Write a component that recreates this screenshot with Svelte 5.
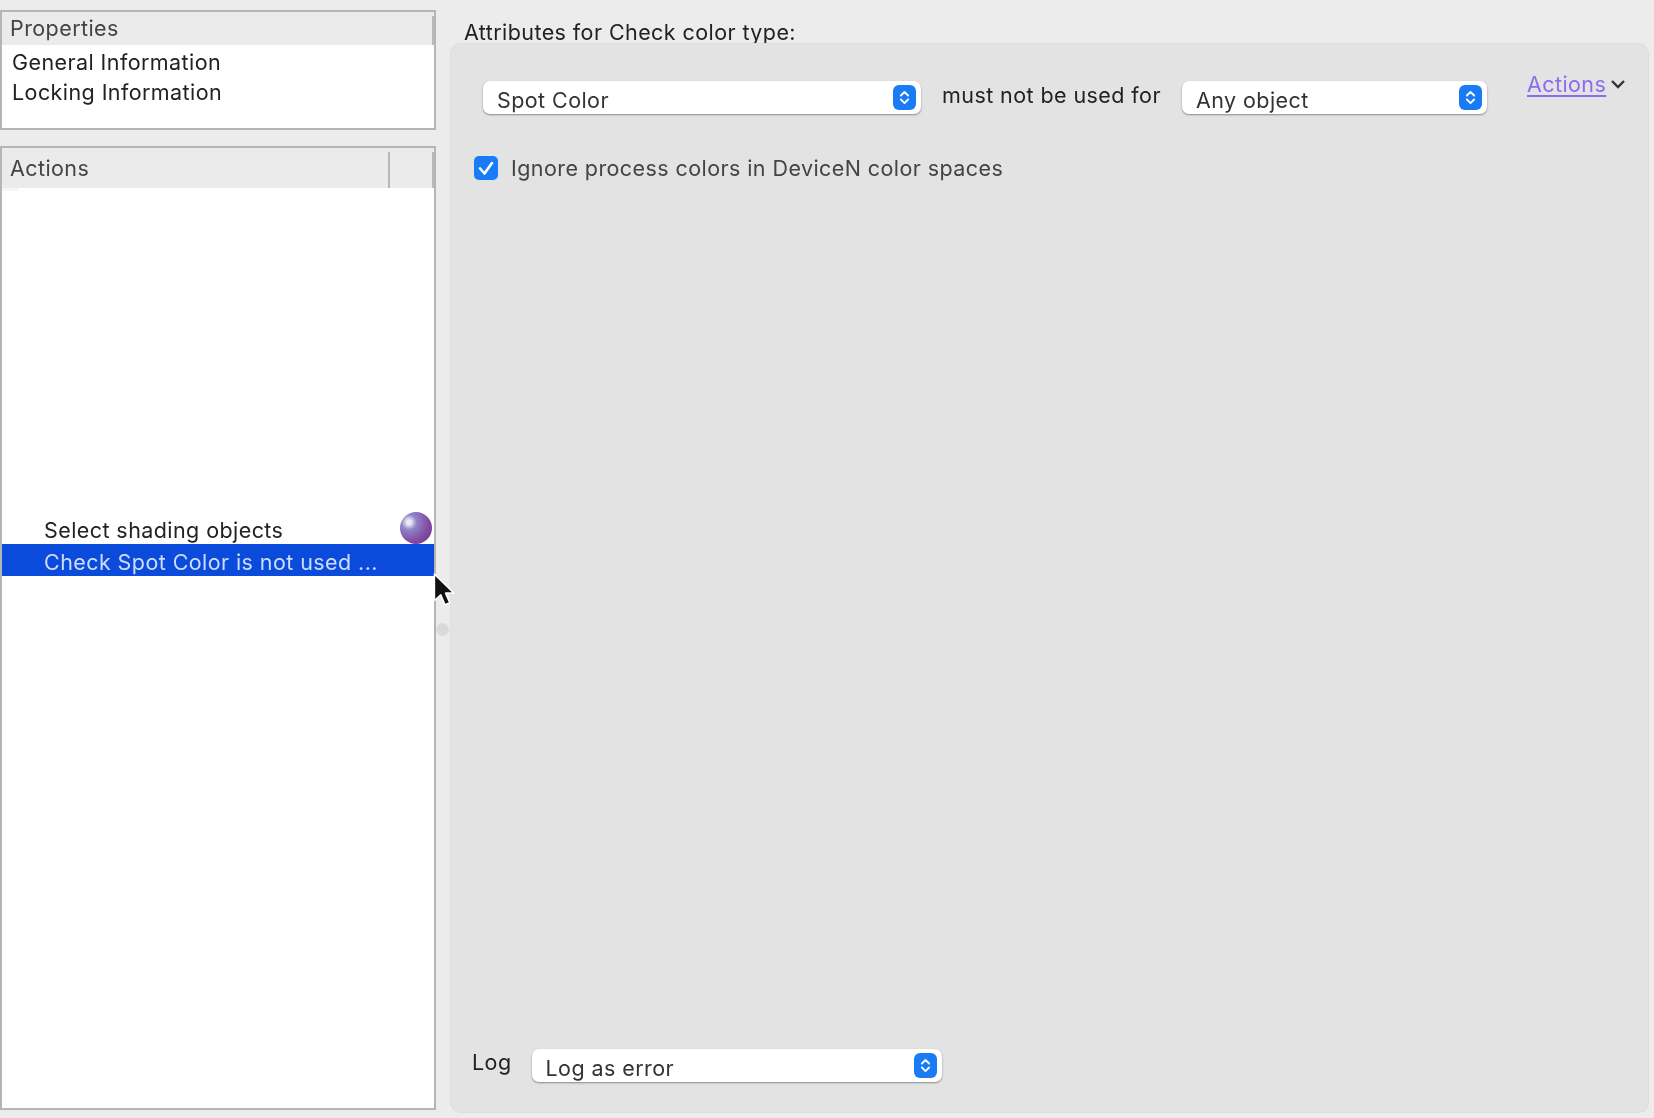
<script>
  const chevrons = "M-3.6 -2 L0 -5.6 L3.6 -2 M-3.6 2 L0 5.6 L3.6 2";
</script>

{#snippet stepper()}
  <span class="stepper">
    <svg width="23" height="25" viewBox="-11.5 -12.5 23 25"><path d={chevrons} fill="none" stroke="#fff" stroke-width="1.8" stroke-linecap="round" stroke-linejoin="round"/></svg>
  </span>
{/snippet}

<div class="page">
  <aside class="left">
    <section class="panel props">
      <header class="head"><span class="title">Properties</span><i class="sep end"></i></header>
      <ul class="plain">
        <li>General Information</li>
        <li>Locking Information</li>
      </ul>
    </section>
    <section class="panel actions">
      <header class="head"><span class="title">Actions</span><i class="sep mid"></i><i class="sep end"></i><i class="notch"></i></header>
      <div class="list">
        <div class="row normal">
          <span>Select shading objects</span>
          <span class="ball"></span>
        </div>
        <div class="row selected"><span>Check Spot Color is not used ...</span></div>
      </div>
    </section>
  </aside>

  <div class="gutter">
    <svg class="cursor" width="26" height="38" viewBox="0 0 24 36"><path d="M2 2 L2 27 L8 21.5 L12 31 L16.5 29 L12.5 20 L20.5 20 Z" fill="#111" stroke="#fff" stroke-width="1.4" stroke-linejoin="round"/></svg>
    <i class="grip"></i>
  </div>

  <main class="right">
    <h1>Attributes for Check color type:</h1>
    <div class="box">
      <div class="top">
        <div class="select s1"><span>Spot Color</span>{@render stepper()}</div>
        <span class="label must">must not be used for</span>
        <div class="select s2"><span>Any object</span>{@render stepper()}</div>
        <div class="link">
          <a href="#a">Actions</a>
          <svg width="16" height="10" viewBox="0 0 16 10"><path d="M2 2 L8 8 L14 2" fill="none" stroke="#333" stroke-width="2.4"/></svg>
        </div>
      </div>
      <label class="check">
        <span class="tick"><svg width="24" height="24" viewBox="0 0 24 24"><path d="M6 12.5 L10.5 17.5 L18 7" fill="none" stroke="#fff" stroke-width="2.6" stroke-linecap="round" stroke-linejoin="round"/></svg></span>
        <span>Ignore process colors in DeviceN color spaces</span>
      </label>
      <div class="log">
        <span class="label">Log</span>
        <div class="select s3"><span>Log as error</span>{@render stepper()}</div>
      </div>
    </div>
  </main>
</div>

<style>
  :global(body) { margin: 0; background: #ececec; }
  .page {
    width: 1654px; height: 1118px; display: flex; background: #ececec; overflow: hidden;
    font-family: Inter, "Liberation Sans", sans-serif; font-size: 21.5px; letter-spacing: 0.42px; color: #333; filter: blur(0.6px);
  }
  .left { width: 436px; flex: none; padding-top: 10px; box-sizing: border-box; display: flex; flex-direction: column; gap: 16px; }
  .panel { border: 2px solid #b5b5b5; background: #fff; box-sizing: border-box; }
  .props { height: 120px; }
  .actions { height: 964px; display: flex; flex-direction: column; }
  .head { display: flex; align-items: center; position: relative; background: #ebebeb; color: #444; padding-left: 8px; }
  .props .head { height: 33px; }
  .props .title { position: relative; top: -1px; }
  .actions .head { height: 40px; }
  .title { font-size: 21.5px; }
  .sep { position: absolute; top: 4px; bottom: 0; width: 2px; background: #b9b9b9; }
  .sep.end { right: 0; }
  .sep.mid { right: 44px; }
  .notch { position: absolute; left: 0; top: 100%; width: 17px; height: 3px; background: #f6f6f6; }
  .plain { list-style: none; margin: 0; padding: 2px 0 0 10px; color: #222; }
  .plain li { height: 30px; line-height: 30px; }
  .list { flex: 1; padding-top: 322px; }
  .row { height: 32px; display: flex; align-items: center; justify-content: space-between; padding: 0 2px 0 42px; position: relative; }
  .row.normal { color: #222; height: 34px; }
  .row.normal span:first-child { position: relative; top: 3px; }
  .row.selected { background: #0b4bdc; color: #cfdcff; }
  .row.selected span { position: relative; top: 2px; }
  .ball {
    width: 32px; height: 32px; border-radius: 50%; margin-top: 2px; flex: none;
    background: radial-gradient(circle at 28% 32%, #ece8f6 0 7%, #8d86c8 24%, #8449a2 62%, #5f3a84 100%);
  }
  .gutter { width: 15px; flex: none; position: relative; z-index: 1; }
  .cursor { position: absolute; left: -4px; top: 572px; }
  .grip { position: absolute; left: 0; top: 623px; width: 13px; height: 13px; border-radius: 50%; background: #dadada; }
  .right { flex: 1; display: flex; flex-direction: column; padding: 21px 6px 6px 0; box-sizing: border-box; min-width: 0; }
  h1 { margin: 0 0 0 13px; font-weight: 400; font-size: 21.5px; line-height: 23px; color: #222; }
  .box {
    flex: 1; background: #e3e3e3; border-radius: 10px; box-shadow: 0 0 0 1px #dedede; position: relative;
    display: flex; flex-direction: column; padding: 37px 0 30px 0; box-sizing: border-box;
  }
  .top { display: flex; align-items: flex-start; padding-left: 32px; }
  .select {
    height: 33px; background: #fff; border-radius: 7px; box-shadow: 0 1px 2px rgba(0,0,0,.4); display: flex;
    align-items: center; justify-content: space-between; padding: 0 5px 0 14px; box-sizing: border-box; flex: none;
    color: #333;
  }
  .select > span:first-child { position: relative; top: 2px; }
  .s1 { width: 438px; }
  .s2 { width: 305px; }
  .s3 { width: 410px; }
  .stepper { width: 23px; height: 25px; border-radius: 6px; background: #1a7cf5; display: block; line-height: 0; }
  .label { color: #222; }
  .must { width: 240px; margin-left: 21px; line-height: 29px; }
  .link { margin-left: 40px; display: flex; align-items: center; gap: 4px; margin-top: -12px; line-height: 30px; }
  .link a { color: #8a6cf2; text-decoration: underline; text-underline-offset: 3px; }
  .check { display: flex; align-items: center; gap: 13px; margin: 41px 0 0 23px; color: #444; }
  .tick { width: 24px; height: 24px; border-radius: 5px; background: #1a7cf5; line-height: 0; flex: none; }
  .log { margin-top: auto; display: flex; align-items: flex-start; gap: 20px; padding-left: 21px; }
  .log .label { line-height: 26px; }
</style>
